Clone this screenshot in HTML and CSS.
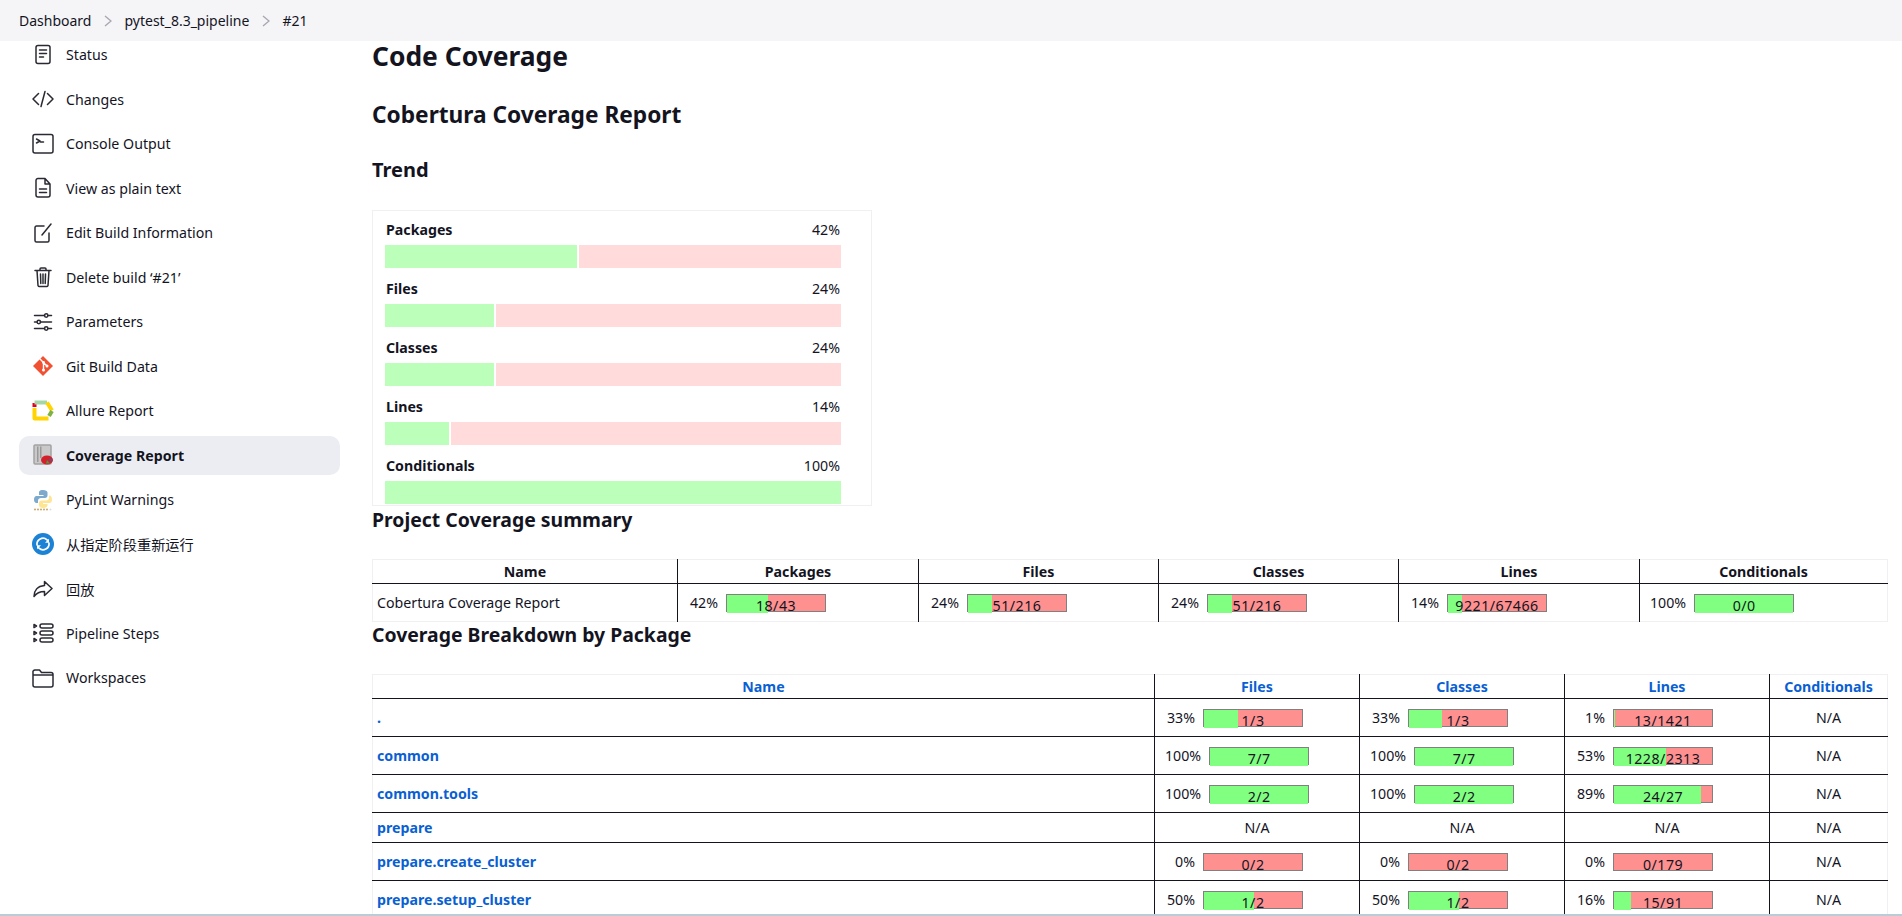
FILE: index.html
```html
<!DOCTYPE html>
<html lang="en">
  <head>
    <meta charset="UTF-8" />
    <meta name="viewport" content="width=device-width, initial-scale=1.0" />
    <title>Code Coverage</title>
    <link rel="stylesheet" href="styles.css">
  </head>
  <body>
    <header class="breadcrumbs">
      <a>Dashboard</a>
      <svg class="chevron" viewBox="0 0 8 12"><path d="M1 1l6 5-6 5" /></svg>
      <a>pytest_8.3_pipeline</a>
      <svg class="chevron" viewBox="0 0 8 12"><path d="M1 1l6 5-6 5" /></svg>
      <a>#21</a>
    </header>

    <div class="page">
      <nav class="sidebar">
        <a class="task">
          <svg class="icon" viewBox="0 0 22 22"><rect x="4" y="1.5" width="14" height="18" rx="2" /><path d="M7.5 6h7M7.5 9.5h7M7.5 13h4" /></svg>
          Status
        </a>
        <a class="task">
          <svg class="icon" viewBox="0 0 22 22"><path d="M6.5 5.5L1 11l5.5 5.5M15.500 5.500L21 11l-5.500 5.500M13 3.500L9 18.500" /></svg>
          Changes
        </a>
        <a class="task">
          <svg class="icon" viewBox="0 0 22 22"><rect x="1" y="1.500" width="20" height="18.500" rx="2" /><path d="M4.500 6l3.500 2-3.500 2M8.500 9h3" /></svg>
          Console Output
        </a>
        <a class="task">
          <svg class="icon" viewBox="0 0 22 22"><path d="M13 1.500H6a2 2 0 0 0-2 2V18a2 2 0 0 0 2 2h10a2 2 0 0 0 2-2V7zM13 1.500V7h5M7.500 12h7M7.500 15.500h7" /></svg>
          View as plain text
        </a>
        <a class="task">
          <svg class="icon" viewBox="0 0 22 22"><path d="M12 4H4.500a1.500 1.500 0 0 0-1.500 1.500v13A1.500 1.500 0 0 0 4.500 20h11a1.500 1.500 0 0 0 1.500-1.500V11M10 13L19 2" /></svg>
          Edit Build Information
        </a>
        <a class="task">
          <svg class="icon" viewBox="0 0 22 22"><path d="M3 4.500h16M5 4.500l1 15a1.500 1.500 0 0 0 1.500 1h7a1.500 1.500 0 0 0 1.500-1l1-15M8 4.500V3a1 1 0 0 1 1-1h4a1 1 0 0 1 1 1v1.500M8.500 8l.3 9.500M11 8v9.500M13.500 8l-.3 9.500" /></svg>
          Delete build ‘#21’
        </a>
        <a class="task">
          <svg class="icon" viewBox="0 0 22 22"><path d="M2.500 4.500h10M16 4.500h3.500M2.500 11h2.500M8.500 11h11M2.500 17.500h10M16 17.500h3.500" /><circle cx="14.200" cy="4.500" r="1.700" /><circle cx="6.800" cy="11" r="1.700" /><circle cx="14.200" cy="17.500" r="1.700" /></svg>
          Parameters
        </a>
        <a class="task">
          <svg class="icon icon-fill" viewBox="0 0 22 22">
            <path fill="#f05133" d="M1 11L11 1l10 10-10 10z" />
            <path class="git-lines" d="M8 4l3.500 3.500v7M11.500 7.500l3.500 3.500" />
            <circle fill="#fff" cx="11.500" cy="15" r="1.500" /><circle fill="#fff" cx="15" cy="11" r="1.500" /><circle fill="#fff" cx="11.500" cy="7.500" r="1.400" />
          </svg>
          Git Build Data
        </a>
        <a class="task">
          <svg class="icon allure" viewBox="0 0 22 22">
            <path stroke="#e2001a" d="M2.500 7V3" />
            <path stroke="#a5d6a7" d="M2.500 2.500H15" />
            <path stroke="#ffd400" d="M15 2.500l5 8" />
            <path stroke="#7cb342" d="M20 11l-3 5" />
            <path stroke="#ffd400" d="M16.500 18.500H2.500V8" />
          </svg>
          Allure Report
        </a>
        <a class="task task-active">
          <svg class="icon icon-fill" viewBox="0 0 22 22">
            <rect fill="#c9c9c9" stroke="#a3a3a3" x="2" y="1" width="17" height="19" rx="1" />
            <path fill="#999" d="M5 2.500h1.500V18H5zM8 2.500h1.500V14H8z" />
            <ellipse fill="#d3202a" cx="15" cy="16" rx="6" ry="4.500" />
            <path fill="#4c9a3f" d="M15 16l3 3.500h-4z" />
            <path fill="#3465a4" d="M15 16l5-1 .5 2z" />
          </svg>
          Coverage Report
        </a>
        <a class="task">
          <svg class="icon icon-fill" viewBox="0 0 22 22">
            <path fill="#7da9cc" d="M11 1C7.500 1 7 2.500 7 3.500V6h4.500v1H4.500C3 7 2 8.500 2 10.500S3 14 4.500 14H6v-2.200C6 10 7.500 9 9 9h4c1.500 0 2.500-1 2.500-2.500v-3C15.500 2 13.500 1 11 1z" />
            <path fill="#fde594" d="M17 6.500V9c0 1.500-1.200 2.500-3 2.500H9.500C8 11.500 7 12.500 7 14v2.500C7 18 9 19 11 19s4.500-.8 4.500-2.500V15H11v-1h6.500c1.500 0 2.500-1.500 2.500-3.500S19 6.500 17.500 6.500z" />
            <g fill="#c9a765"><circle cx="3" cy="20.500" r="1" /><circle cx="6" cy="20.500" r="1" /><circle cx="9" cy="20.500" r="1" /><circle cx="12" cy="20.500" r="1" /><circle cx="15" cy="20.500" r="1" /></g>
            <circle fill="#ddd" cx="18.500" cy="20.500" r="1" />
          </svg>
          PyLint Warnings
        </a>
        <a class="task">
          <svg class="icon icon-fill" viewBox="0 0 22 22">
            <circle fill="#1b82d6" cx="11" cy="11" r="11" />
            <path class="refresh-lines" d="M5 12a6 6 0 0 1 10-5.200l1 1.200M17 10a6 6 0 0 1-10 5.200l-1-1.200" />
            <path fill="#fff" d="M17 5.800v4h-4zM5 16.200v-4h4z" />
          </svg>
          从指定阶段重新运行
        </a>
        <a class="task">
          <svg class="icon" viewBox="0 0 22 22"><path d="M12.500 3.500l7.500 7-7.500 7v-4c-5 0-8 1.500-10.500 5 0-6 3.500-10.500 10.500-11z" /></svg>
          回放
        </a>
        <a class="task">
          <svg class="icon" viewBox="0 0 22 22"><rect x="8" y="2" width="13" height="4" rx="2" /><rect x="8" y="9" width="13" height="4" rx="2" /><rect x="8" y="16" width="13" height="4" rx="2" /><path d="M2 2.500L4.500 4 2 5.500zM2 9.500L4.500 11 2 12.500zM2 16.500L4.500 18 2 19.500z" /></svg>
          Pipeline Steps
        </a>
        <a class="task">
          <svg class="icon" viewBox="0 0 22 22"><path d="M1 5.500V18a2 2 0 0 0 2 2h16a2 2 0 0 0 2-2V7.500a2 2 0 0 0-2-2H9.500L7.500 3H3a2 2 0 0 0-2 2.500zM1 8h20" /></svg>
          Workspaces
        </a>
      </nav>

      <main class="content">
        <h1>Code Coverage</h1>
        <h2>Cobertura Coverage Report</h2>
        <h3>Trend</h3>

        <section class="trend">
          <div class="trend-row">
            <div class="trend-label"><b>Packages</b><span>42%</span></div>
            <div class="trend-bar"><div class="trend-good" style="width: 42%"></div><div class="trend-bad"></div></div>
          </div>
          <div class="trend-row">
            <div class="trend-label"><b>Files</b><span>24%</span></div>
            <div class="trend-bar"><div class="trend-good" style="width: 24%"></div><div class="trend-bad"></div></div>
          </div>
          <div class="trend-row">
            <div class="trend-label"><b>Classes</b><span>24%</span></div>
            <div class="trend-bar"><div class="trend-good" style="width: 24%"></div><div class="trend-bad"></div></div>
          </div>
          <div class="trend-row">
            <div class="trend-label"><b>Lines</b><span>14%</span></div>
            <div class="trend-bar"><div class="trend-good" style="width: 14%"></div><div class="trend-bad"></div></div>
          </div>
          <div class="trend-row">
            <div class="trend-label"><b>Conditionals</b><span>100%</span></div>
            <div class="trend-bar"><div class="trend-good" style="width: 100%"></div></div>
          </div>
        </section>

        <h4 class="summary-title">Project Coverage summary</h4>
        <table class="coverage summary">
          <colgroup><col class="c-name" /><col class="c-a" /><col class="c-b" /><col class="c-b" /><col class="c-a" /><col /></colgroup>
          <thead>
            <tr><th>Name</th><th>Packages</th><th>Files</th><th>Classes</th><th>Lines</th><th>Conditionals</th></tr>
          </thead>
          <tbody>
            <tr>
              <td class="name plain">Cobertura Coverage Report</td>
              <td><div class="graph"><span class="pct">42%</span><div class="bar"><div class="fill" style="width: 42%"></div><span class="bar-text">18/43</span></div></div></td>
              <td><div class="graph"><span class="pct">24%</span><div class="bar"><div class="fill" style="width: 24%"></div><span class="bar-text">51/216</span></div></div></td>
              <td><div class="graph"><span class="pct">24%</span><div class="bar"><div class="fill" style="width: 24%"></div><span class="bar-text">51/216</span></div></div></td>
              <td><div class="graph"><span class="pct">14%</span><div class="bar"><div class="fill" style="width: 14%"></div><span class="bar-text">9221/67466</span></div></div></td>
              <td><div class="graph"><span class="pct">100%</span><div class="bar"><div class="fill" style="width: 100%"></div><span class="bar-text">0/0</span></div></div></td>
            </tr>
          </tbody>
        </table>

        <h4 class="breakdown-title">Coverage Breakdown by Package</h4>
        <table class="coverage breakdown">
          <colgroup><col class="p-name" /><col class="p-col" /><col class="p-col" /><col class="p-col" /><col /></colgroup>
          <thead>
            <tr><th><a>Name</a></th><th><a>Files</a></th><th><a>Classes</a></th><th><a>Lines</a></th><th><a>Conditionals</a></th></tr>
          </thead>
          <tbody>
            <tr>
              <td class="name"><a>.</a></td>
              <td><div class="graph"><span class="pct">33%</span><div class="bar"><div class="fill" style="width: 35%"></div><span class="bar-text">1/3</span></div></div></td>
              <td><div class="graph"><span class="pct">33%</span><div class="bar"><div class="fill" style="width: 34%"></div><span class="bar-text">1/3</span></div></div></td>
              <td><div class="graph"><span class="pct">1%</span><div class="bar"><div class="fill" style="width: 1%"></div><span class="bar-text">13/1421</span></div></div></td>
              <td class="na">N/A</td>
            </tr>
            <tr>
              <td class="name"><a>common</a></td>
              <td><div class="graph"><span class="pct">100%</span><div class="bar"><div class="fill" style="width: 100%"></div><span class="bar-text">7/7</span></div></div></td>
              <td><div class="graph"><span class="pct">100%</span><div class="bar"><div class="fill" style="width: 100%"></div><span class="bar-text">7/7</span></div></div></td>
              <td><div class="graph"><span class="pct">53%</span><div class="bar"><div class="fill" style="width: 53%"></div><span class="bar-text">1228/2313</span></div></div></td>
              <td class="na">N/A</td>
            </tr>
            <tr>
              <td class="name"><a>common.tools</a></td>
              <td><div class="graph"><span class="pct">100%</span><div class="bar"><div class="fill" style="width: 100%"></div><span class="bar-text">2/2</span></div></div></td>
              <td><div class="graph"><span class="pct">100%</span><div class="bar"><div class="fill" style="width: 100%"></div><span class="bar-text">2/2</span></div></div></td>
              <td><div class="graph"><span class="pct">89%</span><div class="bar"><div class="fill" style="width: 89%"></div><span class="bar-text">24/27</span></div></div></td>
              <td class="na">N/A</td>
            </tr>
            <tr class="short">
              <td class="name"><a>prepare</a></td>
              <td class="na">N/A</td>
              <td class="na">N/A</td>
              <td class="na">N/A</td>
              <td class="na">N/A</td>
            </tr>
            <tr>
              <td class="name"><a>prepare.create_cluster</a></td>
              <td><div class="graph"><span class="pct">0%</span><div class="bar"><span class="bar-text">0/2</span></div></div></td>
              <td><div class="graph"><span class="pct">0%</span><div class="bar"><span class="bar-text">0/2</span></div></div></td>
              <td><div class="graph"><span class="pct">0%</span><div class="bar"><span class="bar-text">0/179</span></div></div></td>
              <td class="na">N/A</td>
            </tr>
            <tr>
              <td class="name"><a>prepare.setup_cluster</a></td>
              <td><div class="graph"><span class="pct">50%</span><div class="bar"><div class="fill" style="width: 51%"></div><span class="bar-text">1/2</span></div></div></td>
              <td><div class="graph"><span class="pct">50%</span><div class="bar"><div class="fill" style="width: 51%"></div><span class="bar-text">1/2</span></div></div></td>
              <td><div class="graph"><span class="pct">16%</span><div class="bar"><div class="fill" style="width: 17%"></div><span class="bar-text">15/91</span></div></div></td>
              <td class="na">N/A</td>
            </tr>
          </tbody>
        </table>
      </main>
    </div>

    <div class="status-strip"></div>
  </body>
</html>
```

FILE: styles.css
```css
* {
  box-sizing: border-box;
}
html,
body {
  height: 100%;
}
body {
  margin: 0;
  display: flex;
  flex-direction: column;
  overflow: hidden;
  font-family: "Noto Sans", "Noto Sans CJK SC", sans-serif;
  font-size: 14.2px;
  color: #14141f;
  background-color: white;
}

/* top bar */
.breadcrumbs {
  flex: none;
  height: 41px;
  display: flex;
  align-items: center;
  padding-left: 19px;
  font-size: 14px;
  background-color: #f5f5f7;
}
.chevron {
  width: 8px;
  height: 12px;
  margin: 0 12.5px;
  fill: none;
  stroke: #a8a8b0;
  stroke-width: 1.4;
}

.page {
  flex: 1;
  min-height: 0;
  display: flex;
}

/* side panel, scrolled a little under the top bar */
.sidebar {
  flex: none;
  width: 372px;
  padding: 0 32px 0 19px;
  margin-top: -6px;
  display: flex;
  flex-direction: column;
  gap: 5.5px;
}
.task {
  flex: none;
  height: 39px;
  display: flex;
  align-items: center;
  gap: 12px;
  padding-left: 13px;
  border-radius: 10px;
}
.task-active {
  font-weight: bold;
  background-color: #ecedf2;
}
.icon {
  flex: none;
  width: 22px;
  height: 22px;
  fill: none;
  stroke: #14141f;
  stroke-width: 1.5;
  stroke-linecap: round;
  stroke-linejoin: round;
  opacity: 0.9;
}
.icon-fill {
  stroke: none;
  opacity: 1;
}
.git-lines {
  fill: none;
  stroke: white;
  stroke-width: 1.4;
}
.refresh-lines {
  fill: none;
  stroke: white;
  stroke-width: 1.7;
}
.allure {
  stroke-width: 4;
  stroke-linecap: butt;
  opacity: 1;
}

/* main column */
.content {
  flex: 1;
  min-width: 0;
  padding-right: 14px;
}
h1,
h2,
h3,
h4 {
  margin: 0;
  font-weight: bold;
}
h1 {
  font-size: 26.4px;
  line-height: 31px;
}
h2 {
  font-size: 22.7px;
  line-height: 32px;
  margin-top: 27px;
}
h3 {
  font-size: 20px;
  line-height: 28px;
  margin-top: 25px;
}
h4 {
  font-size: 19.4px;
  line-height: 26px;
}

/* trend card */
.trend {
  width: 500px;
  height: 296px;
  margin-top: 26px;
  padding: 8px 30px 0 12px;
  border: 1px solid #f0f0f0;
}
.trend-row {
  height: 59px;
}
.trend-label {
  height: 26px;
  line-height: 22px;
  display: flex;
  justify-content: space-between;
  padding: 0 1px;
}
.trend-bar {
  display: flex;
  gap: 2px;
  height: 23px;
}
.trend-good {
  background-color: #bbffbb;
}
.trend-bad {
  flex: 1;
  background-color: #ffdbdb;
}

/* tables */
.summary-title {
  margin-top: 1px;
}
.coverage {
  width: 1516px;
  table-layout: fixed;
  border-collapse: collapse;
  border: 1px solid #f0f0f2;
}
.summary {
  margin-top: 26px;
}
.breakdown {
  margin-top: 26px;
}
.c-name {
  width: 305px;
}
.c-a {
  width: 241px;
}
.c-b {
  width: 240px;
}
.p-name {
  width: 782px;
}
.p-col {
  width: 205px;
}
.coverage th,
.coverage td {
  padding: 0;
  border-left: 1px solid #14141f;
  border-bottom: 1px solid #14141f;
}
.coverage th:first-child,
.coverage td:first-child {
  border-left: 0;
}
.coverage th {
  height: 24px;
  text-align: center;
  font-weight: bold;
}
.coverage td {
  height: 38px;
}
.summary td {
  border-bottom: 0;
}
.short td {
  height: 30px;
}
.coverage a {
  color: #0a5fd2;
}
.coverage .name {
  padding-left: 4px;
  font-weight: bold;
}
.coverage .plain {
  font-weight: normal;
}
.na {
  text-align: center;
}

/* percent graph */
.graph {
  display: flex;
  align-items: center;
  gap: 8px;
  padding-left: 10px;
}
.pct {
  min-width: 30px;
  text-align: right;
}
.bar {
  position: relative;
  width: 100px;
  height: 18px;
  border: 1px solid #808080;
  background-color: #ff9090;
  text-align: center;
  line-height: 22px;
}
.fill {
  position: absolute;
  left: 0;
  top: 0;
  height: 18px;
  background-color: #80ff80;
}
.bar-text {
  position: relative;
  letter-spacing: 0.5px;
}

.status-strip {
  position: relative;
  flex: none;
  height: 2px;
  background-color: #b9cdd9;
}
```
